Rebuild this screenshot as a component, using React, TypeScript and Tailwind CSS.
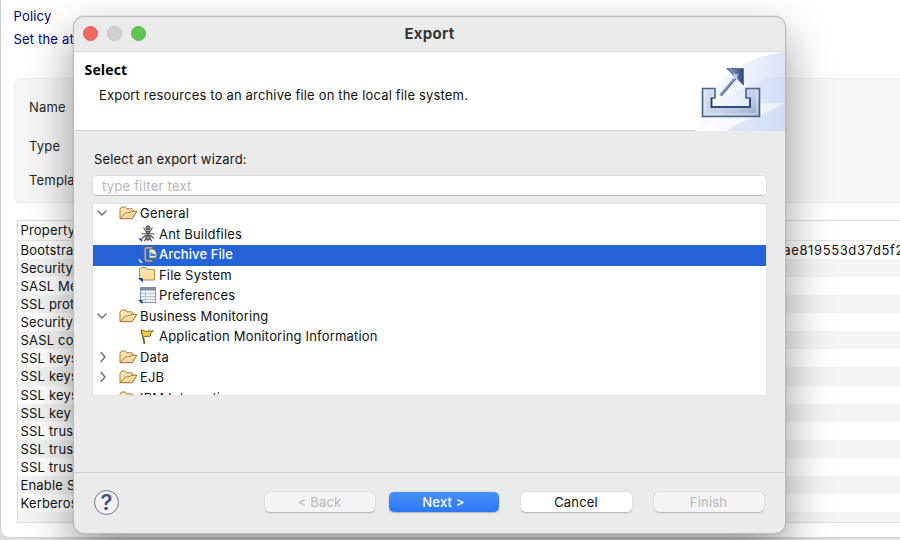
import React from "react";

const properties = [
  "Bootstrap servers", "Security protocol", "SASL Mechanisms", "SSL protocol", "Security identity", "SASL config",
  "SSL keystore file", "SSL keystore type", "SSL keystore password", "SSL key password", "SSL truststore file",
  "SSL truststore type", "SSL truststore password", "Enable SSL", "Kerberos",
];

const buttons = [
  { label: "< Back", style: "w-[110px] bg-[#f4f4f4] text-[#b8b8b8]" },
  { label: "Next >", style: "ml-[14px] w-[110px] bg-linear-to-b from-[#4790f8] to-[#2b79f5] font-medium text-white" },
  { label: "Cancel", style: "ml-[22px] w-[111px] bg-white text-[#111]" },
  { label: "Finish", style: "ml-[22px] w-[110px] bg-[#f4f4f4] text-[#b8b8b8]" },
];

function Folder() {
  return (
    <svg width="19" height="16" viewBox="0 0 19 16" className="shrink-0">
      <path d="M1 14V4.2L2.6 2H6.4l1.3 1.8h5.1l1.2 1.4V8" fill="#fbe6b4" stroke="#b57b3a" />
      <path d="M1.2 13.7 6 8.3l5-.7 1.5-1.3h5.5l-4.9 7.4z" fill="#f7d998" stroke="#a5662a" strokeLinejoin="round" />
      <path d="m3.7 12.4 3.1-3.2 5-.6 1-1.1h3.2" fill="none" stroke="#fff3cf" />
    </svg>
  );
}

function LeafIcon({ kind }: { kind: string }) {
  return (
    <svg width="19" height="19" viewBox="0 0 19 19" className="shrink-0">
      {kind === "ant" && (
        <g>
          <path d="m5.5 3.5 2.5 4h4l2.5-4M3.5 9.8h13M4 14.5l4-3.5M16 14.5l-4-3.5M6 17.3l3-4M14 17.3l-3-4" stroke="#555" strokeWidth="1.1" fill="none" />
          <circle cx="10" cy="4" r="2.5" fill="#5c5c60" /><circle cx="10" cy="8.8" r="2.1" fill="#4b4b4b" /><ellipse cx="10" cy="13.6" rx="2.7" ry="3.1" fill="#5c5c60" />
          <circle cx="10" cy="4" r="1" fill="#a0a0a6" /><circle cx="10" cy="8.8" r=".8" fill="#999" /><circle cx="10" cy="13.6" r="1.2" fill="#a0a0a6" />
          <path d="M0 14.5h4.2V18z" fill="#1552a5" />
        </g>
      )}
      {kind === "archive" && (
        <g>
          <path d="M14 3.5V2.5H8L7 3.8v10.4L8.2 16H14v-1.5" fill="none" stroke="#59677f" strokeWidth="3" />
          <path d="M14 2.8H8.2L7.2 4v10l1 1.8H14" fill="none" stroke="#b9c1d0" strokeWidth="1.2" />
          <path d="M11.5 4.5h3.8l2.7 2.6v5.7h-6.5z" fill="#fff5c9" stroke="#b39a5e" />
          <path d="M12.5 7.5h2V9H17v2h-4.5z" fill="#4a7cb0" />
          <path d="M0 14.5h2L4.8 18H3z" fill="#fff" />
        </g>
      )}
      {kind === "files" && (
        <g>
          <path d="M1.5 15V4L3 2.5h4.5l1.3 2h7.7V15z" fill="#f9dfa0" stroke="#b98a48" />
          <path d="M2.2 6h13.6" stroke="#fff1c9" />
          <path d="M0 13h5v4.5z" fill="#174ca0" />
        </g>
      )}
      {kind === "preferences" && (
        <g>
          <path d="M2.5 1.5h15v15h-15z" fill="#f3f6fb" stroke="#8092ae" />
          <path d="M2 1h16v3.5H2z" fill="#7f8ea8" />
          <path d="M7.5 4.5v12M3 7.5h14M3 10.5h14M3 13.5h14" stroke="#b4c1d4" />
          <path d="M12.5 4.5v12" stroke="#d3dbe8" />
          <path d="M0 14h4.5v4z" fill="#174ca0" />
        </g>
      )}
      {kind === "flag" && (
        <g>
          <path d="M3.8 3.5 6.5 17" stroke="#7d6426" strokeWidth="1.9" />
          <path d="m3 2.8 4.6 1.5 7.7-.5-3 2.8.2 2.6-5.5.2L5 10.5z" fill="#efcb45" stroke="#6b5a22" strokeWidth=".9" />
        </g>
      )}
    </svg>
  );
}

function Group({ name, open = false, chevron = true }: { name: string; open?: boolean; chevron?: boolean }) {
  return (
    <div className="flex h-[20.5px] shrink-0 items-center pb-[2px] pl-[3px]">
      <svg width="12" height="12" viewBox="0 0 12 12" fill="none" stroke="#737373" strokeWidth="1.5" strokeLinecap="round" strokeLinejoin="round">
        {chevron && <path d={open ? "m2 4 4 4 4-4" : "m5 1.5 4 4.5-4 4.5"} />}
      </svg>
      <span className="ml-[11px] flex"><Folder /></span>
      <span className="ml-[2px]">{name}</span>
    </div>
  );
}

function Leaf({ name, kind, selected = false }: { name: string; kind: string; selected?: boolean }) {
  return (
    <div className={selected ? "flex h-[20.5px] shrink-0 items-center bg-[#2563d9] pb-[2px] pl-[45px] font-medium tracking-[0.1px] text-white" : "flex h-[20.5px] shrink-0 items-center pb-[2px] pl-[45px]"}>
      <LeafIcon kind={kind} /><span className="ml-[2px]">{name}</span>
    </div>
  );
}

function ExportArt() {
  return (
    <svg width="92" height="79" viewBox="0 0 92 79">
      <defs>
        <linearGradient id="wash" x1="0" x2="1"><stop stopColor="#f8faff" /><stop offset=".5" stopColor="#f0f4fd" /><stop offset="1" stopColor="#dbe4f7" /></linearGradient>
        <linearGradient id="band" x1="0" x2="1"><stop stopColor="#e6edfa" stopOpacity=".2" /><stop offset="1" stopColor="#cad8f3" /></linearGradient>
        <linearGradient id="tray" x1="0" x2="1" y2="1"><stop stopColor="#dde4f1" /><stop offset=".6" stopColor="#c4cfe4" /><stop offset="1" stopColor="#94a6c9" /></linearGradient>
        <linearGradient id="arrow"><stop stopColor="#8fa5cb" /><stop offset="1" stopColor="#2c4779" /></linearGradient>
      </defs>
      <path d="M2 79C6 39 46 4 92 0v79z" fill="url(#wash)" />
      <path d="M18 79C27 43 56 27 92 24v55z" fill="url(#band)" opacity=".6" />
      <path d="M8 79C22 55 54 51 92 51 73 63 42 70 34 79z" fill="#fff" opacity=".5" />
      <path d="M34 79C50 65 78 66 92 54v25z" fill="#d0dcf4" opacity=".45" />
      <path d="M9.5 36.5H22V46h-3.5v9H57v-9h-4v-9.5h13.5v28h-57z" fill="url(#tray)" stroke="#4c6390" strokeWidth="1.6" />
      <path d="M18.5 46v9H57v-9" fill="none" stroke="#1f3c78" strokeWidth="1.5" />
      <path d="M12 39v23h52V39" fill="none" stroke="#f1f5fb" opacity=".75" />
      <path d="m27.5 43.5 15-17.5" stroke="#8095bc" strokeWidth="3" />
      <path d="m28.3 43.9 14.5-17" stroke="#506b9b" />
      <path d="M33.7 16.5h16.8V33z" fill="url(#arrow)" stroke="#5b719c" />
      <path d="m37.5 27.5 3.5-4-1-3.5 3 2.5 3-1-2 3 1 3-3-1z" fill="#dce9f6" opacity=".75" />
    </svg>
  );
}

function Background() {
  return (
    <div className="flex h-[538px] flex-col rounded-bl-[9px] border-b border-l border-[#d2d2d2] bg-white pl-[12.5px]">
      <div className="h-[78px] shrink-0 pt-[5px] leading-[22.5px] text-[#00007d]"><div>Policy</div><div>Set the attributes</div></div>
      <div className="h-[125px] shrink-0 rounded-l-[6px] border border-r-0 border-[#ececec] bg-[#f6f6f6] pl-[14.5px] text-[#242424]">
        <div className="h-[39px] pt-[20px]">Name</div><div className="h-[34px] pt-[20px]">Type</div><div className="pt-[20px]">Template</div>
      </div>
      <div className="ml-[3px] mt-[17px] flex h-[303px] shrink-0 flex-col overflow-hidden border border-r-0 border-[#dcdcdc] bg-white">
        <div className="flex h-[20px] shrink-0 items-center border-b border-[#e6e6e6] pb-px pl-[3px]">Property</div>
        {properties.map((name, index) => (
          <div key={index} className="flex h-[18.07px] shrink-0 items-center justify-between whitespace-nowrap pl-[3px] odd:bg-[#f3f5f5] even:bg-white">
            <span>{name}</span>{index === 0 && <span className="-mr-[4px] tracking-[0.62px]">ae819553d37d5f2</span>}
          </div>
        ))}
        <div className="grow bg-[#f3f5f5]" />
      </div>
    </div>
  );
}

export default function App() {
  return (
    <main className="relative h-[540px] w-[900px] overflow-hidden bg-[#dedede] font-[Inter,sans-serif] text-[13px] leading-[16px] tracking-[0.18px] text-[#111]">
      <Background />
      <section className="absolute left-[73px] top-[16px] flex h-[518px] w-[713px] flex-col overflow-hidden rounded-[11px] border border-[#bcbcbc] bg-[#ebebeb] shadow-[0_20px_46px_rgba(0,0,0,0.4),0_0_2px_rgba(0,0,0,0.15)]">
        <header className="relative flex h-[35px] shrink-0 items-center justify-center border-b border-[#dcdcdc] pb-px text-[15px] font-bold tracking-[0.3px] text-[#363636]">
          <div className="absolute left-[9px] top-[9px] flex gap-[9px]"><i className="size-[15px] rounded-full border border-[#db6259] bg-[#ed6a5e]" /><i className="size-[15px] rounded-full border border-[#c3c3c3] bg-[#d1d1d1]" /><i className="size-[15px] rounded-full border border-[#59b84c] bg-[#61c554]" /></div>
          Export
        </header>
        <div className="flex h-[79px] shrink-0 justify-between border-b border-[#cfcfcf] bg-white pl-[10.5px]">
          <div className="pt-[9px]"><h1 className="font-['Open_Sans'] text-[14px] font-bold leading-[18px] text-black">Select</h1><p className="ml-[14.5px] mt-[8px] tracking-[0.17px]">Export resources to an archive file on the local file system.</p></div>
          <ExportArt />
        </div>
        <div className="flex h-[342px] shrink-0 flex-col border-b border-[#d2d2d2] px-[18px] pt-[20px]">
          <label className="ml-[2px]">Select an export wizard:</label>
          <div className="mt-[8px] flex h-[21px] shrink-0 items-center rounded-[5px] border border-[#dedede] border-b-[#bcbcbc] bg-white pl-[9px] tracking-[0.25px] text-[#b7b7b7]">type filter text</div>
          <div className="mt-[7px] flex h-[193px] shrink-0 flex-col overflow-hidden border border-[#e3e3e3] bg-white">
            <Group name="General" open /><Leaf name="Ant Buildfiles" kind="ant" /><Leaf name="Archive File" kind="archive" selected /><Leaf name="File System" kind="files" /><Leaf name="Preferences" kind="preferences" />
            <Group name="Business Monitoring" open /><Leaf name="Application Monitoring Information" kind="flag" /><Group name="Data" /><Group name="EJB" /><Group name="IBM Integration" chevron={false} />
          </div>
        </div>
        <footer className="flex grow items-center pb-[2px] pl-[20px]">
          <span className="flex size-[25px] shrink-0 items-center justify-center rounded-full border-[1.5px] border-[#687999] bg-[#f1f2f4] text-[22px] font-semibold text-[#3e5279]">?</span>
          <div className="ml-[145.5px] flex">
            {buttons.map(({ label, style }) => (
              <button key={label} className={`flex h-[20px] shrink-0 items-center justify-center rounded-[5px] pb-px shadow-[0_0.5px_1.5px_rgba(0,0,0,0.25)] ${style}`}>{label}</button>
            ))}
          </div>
        </footer>
      </section>
    </main>
  );
}
